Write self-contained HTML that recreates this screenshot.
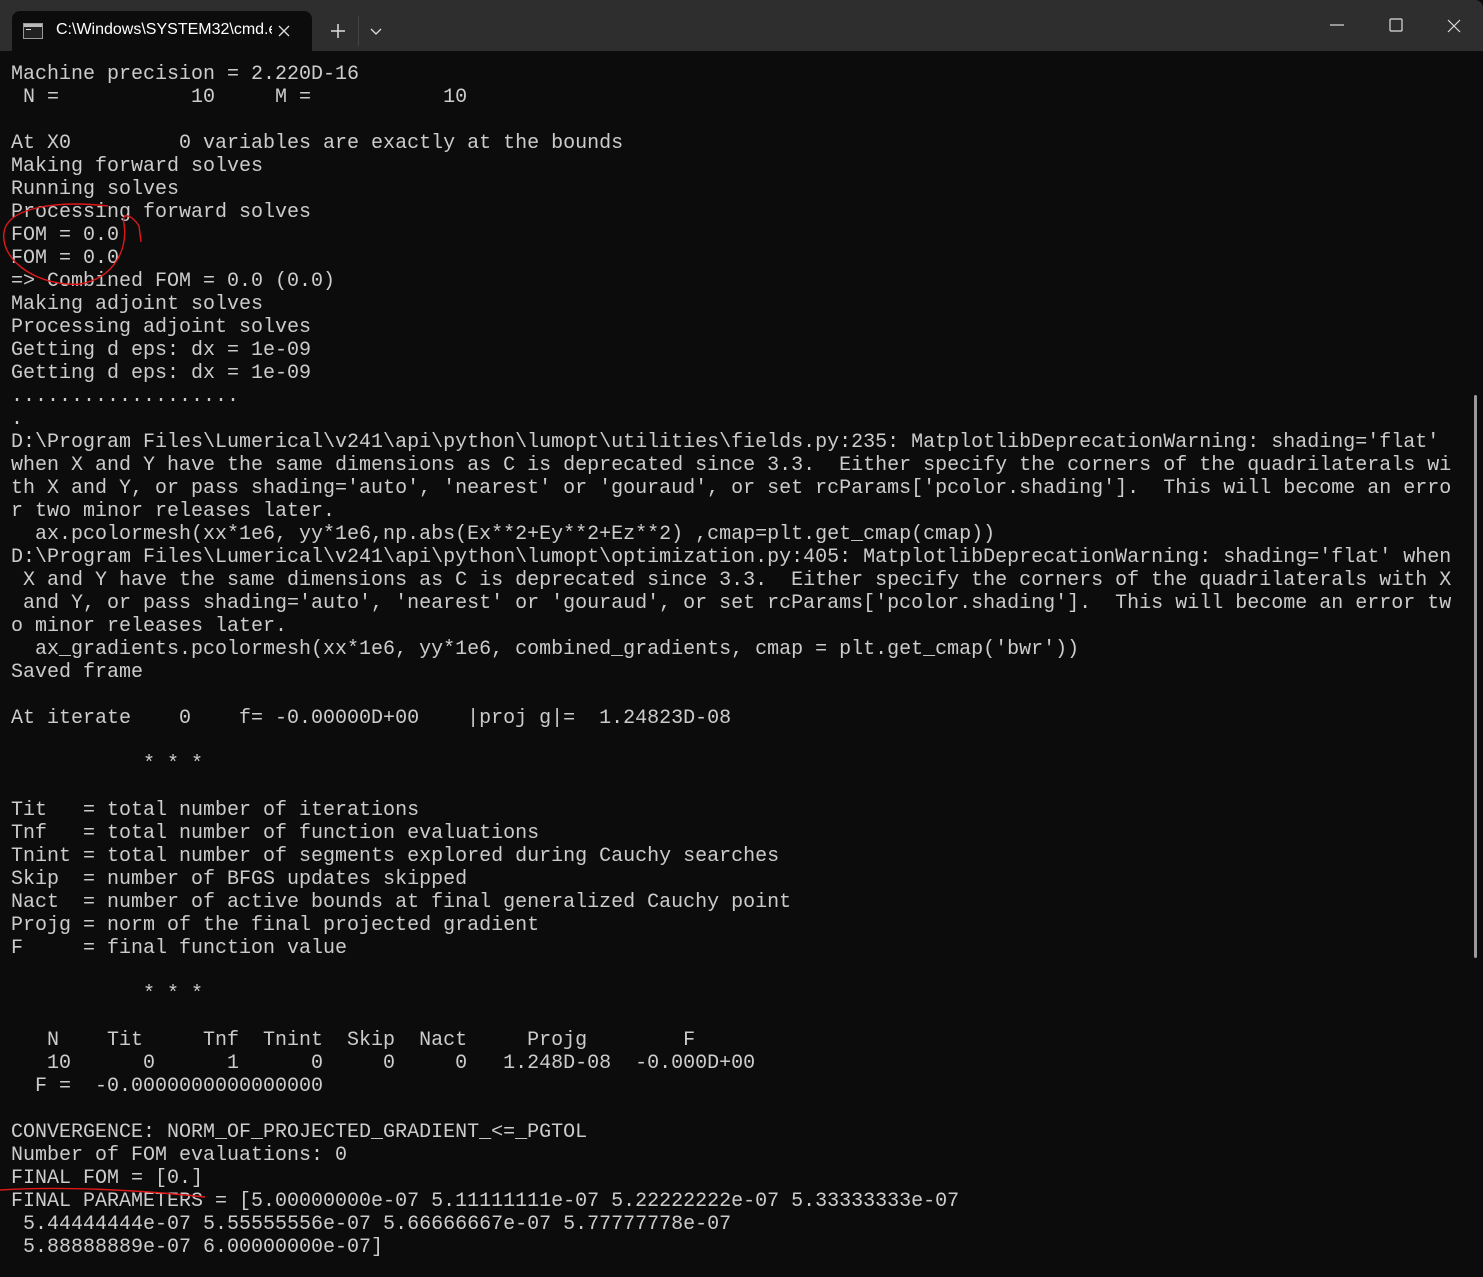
<!DOCTYPE html>
<html><head><meta charset="utf-8"><style>
html,body{margin:0;padding:0;}
body{width:1483px;height:1277px;background:#0c0c0c;position:relative;overflow:hidden;font-family:"Liberation Mono",monospace;}
#bar{position:absolute;left:0;top:0;width:1483px;height:51px;background:#2e2e2e;border-top-right-radius:8px;}
#tab{position:absolute;left:12px;top:11px;width:300px;height:40px;background:#0c0c0c;border-radius:8px 8px 0 0;}
#tab .t{position:absolute;left:44px;top:10px;font-family:"Liberation Sans",sans-serif;font-size:16px;color:#fff;width:216px;overflow:hidden;white-space:nowrap;}
pre{position:absolute;left:11px;top:63px;margin:0;font-family:"Liberation Mono",monospace;font-size:20px;line-height:23px;color:#cccccc;white-space:pre;}
.ic{position:absolute;}
</style></head><body>
<div id="bar">
 <div id="tab">
  <svg class="ic" style="left:11px;top:12px" width="20" height="16"><rect x="0.5" y="0.5" width="19" height="15" fill="#222" stroke="#999"/><rect x="1" y="1" width="18" height="3" fill="#bbb"/><rect x="3" y="6" width="5" height="1" fill="#ddd"/></svg>
  <div class="t">C:\Windows\SYSTEM32\cmd.exe</div>
  <svg class="ic" style="left:266px;top:14px" width="12" height="12"><path d="M1 1L11 11M11 1L1 11" stroke="#ddd" stroke-width="1.3"/></svg>
 </div>
 <svg class="ic" style="left:331px;top:24px" width="14" height="14"><path d="M7 0V14M0 7H14" stroke="#ddd" stroke-width="1.5"/></svg>
 <div class="ic" style="left:358px;top:16px;width:1px;height:30px;background:#444"></div>
 <svg class="ic" style="left:370px;top:28px" width="12" height="8"><path d="M1 1L6 6L11 1" stroke="#ddd" stroke-width="1.3" fill="none"/></svg>
 <svg class="ic" style="left:1330px;top:24px" width="14" height="2"><path d="M0 1H14" stroke="#ddd" stroke-width="1.2"/></svg>
 <svg class="ic" style="left:1389px;top:18px" width="14" height="14"><rect x="1" y="1" width="12" height="12" rx="1" fill="none" stroke="#ddd" stroke-width="1.2"/></svg>
 <svg class="ic" style="left:1447px;top:19px" width="14" height="14"><path d="M1 1L13 13M13 1L1 13" stroke="#ddd" stroke-width="1.2"/></svg>
</div>
<pre>Machine precision = 2.220D-16
 N =           10     M =           10

At X0         0 variables are exactly at the bounds
Making forward solves
Running solves
Processing forward solves
FOM = 0.0
FOM = 0.0
=> Combined FOM = 0.0 (0.0)
Making adjoint solves
Processing adjoint solves
Getting d eps: dx = 1e-09
Getting d eps: dx = 1e-09
...................
.
D:\Program Files\Lumerical\v241\api\python\lumopt\utilities\fields.py:235: MatplotlibDeprecationWarning: shading='flat'
when X and Y have the same dimensions as C is deprecated since 3.3.  Either specify the corners of the quadrilaterals wi
th X and Y, or pass shading='auto', 'nearest' or 'gouraud', or set rcParams['pcolor.shading'].  This will become an erro
r two minor releases later.
  ax.pcolormesh(xx*1e6, yy*1e6,np.abs(Ex**2+Ey**2+Ez**2) ,cmap=plt.get_cmap(cmap))
D:\Program Files\Lumerical\v241\api\python\lumopt\optimization.py:405: MatplotlibDeprecationWarning: shading='flat' when
 X and Y have the same dimensions as C is deprecated since 3.3.  Either specify the corners of the quadrilaterals with X
 and Y, or pass shading='auto', 'nearest' or 'gouraud', or set rcParams['pcolor.shading'].  This will become an error tw
o minor releases later.
  ax_gradients.pcolormesh(xx*1e6, yy*1e6, combined_gradients, cmap = plt.get_cmap('bwr'))
Saved frame

At iterate    0    f= -0.00000D+00    |proj g|=  1.24823D-08

           * * *

Tit   = total number of iterations
Tnf   = total number of function evaluations
Tnint = total number of segments explored during Cauchy searches
Skip  = number of BFGS updates skipped
Nact  = number of active bounds at final generalized Cauchy point
Projg = norm of the final projected gradient
F     = final function value

           * * *

   N    Tit     Tnf  Tnint  Skip  Nact     Projg        F
   10      0      1      0     0     0   1.248D-08  -0.000D+00
  F =  -0.0000000000000000

CONVERGENCE: NORM_OF_PROJECTED_GRADIENT_&lt;=_PGTOL
Number of FOM evaluations: 0
FINAL FOM = [0.]
FINAL PARAMETERS = [5.00000000e-07 5.11111111e-07 5.22222222e-07 5.33333333e-07
 5.44444444e-07 5.55555556e-07 5.66666667e-07 5.77777778e-07
 5.88888889e-07 6.00000000e-07]</pre>
<svg class="ic" style="left:0;top:0" width="1483" height="1277">
 <path d="M108 206 C55 200 8 208 4 232 C0 262 40 287 80 284 C115 278 128 248 124 224 C121 210 133 216 139 226 L141 242" fill="none" stroke="#e01818" stroke-width="1.4"/>
 <path d="M0 1190 C60 1186 140 1190 205 1197" fill="none" stroke="#e01818" stroke-width="1.4"/>
 <rect x="1474" y="395" width="3" height="563" rx="1.5" fill="#9a9a9a"/>
</svg>
</body></html>
